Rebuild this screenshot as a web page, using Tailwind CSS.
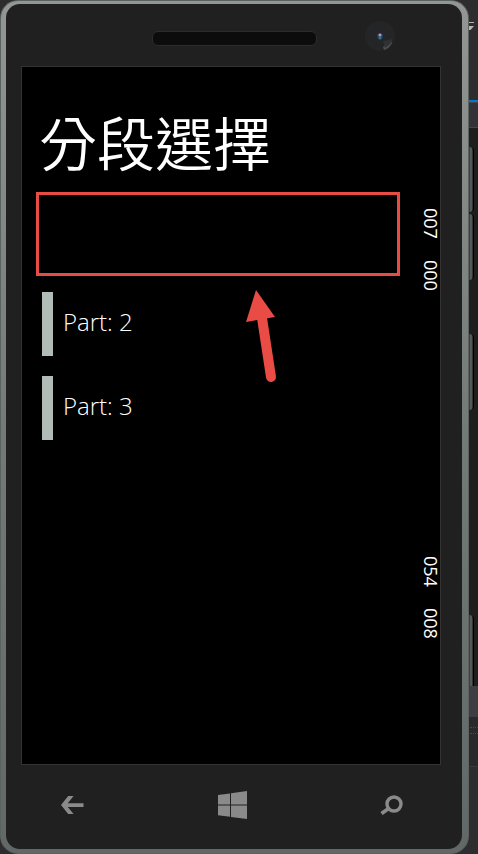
<!DOCTYPE html>
<html lang="zh-Hant">
  <head>
    <meta charset="utf-8" />
    <title>分段選擇</title>
    <meta name="viewport" content="width=device-width, initial-scale=1" />
    <script src="https://cdn.jsdelivr.net/npm/@tailwindcss/browser@4"></script>
  </head>

  <body class="flex min-h-screen overflow-hidden bg-[#2d2d30] font-['Open_Sans','Noto_Sans_CJK_TC',sans-serif] text-white">
    <main
      class="flex flex-1 flex-col rounded-[18px] border border-[#5c625f] bg-linear-to-b from-[#929794] via-[#747a77] to-[#616866] pt-[3px] pr-1.5 pb-1 pl-[5px]"
    >
      <div class="flex flex-1 flex-col rounded-[14px] bg-[#202020]">
        <!-- speaker and front camera -->
        <header class="relative h-[62px]">
          <div class="mx-auto mt-[27px] h-[15px] w-[165px] rounded-md border border-[#2c2c2c] bg-[#0c0c0c]"></div>
          <svg class="absolute top-[17px] right-[67px] size-[30px]" viewBox="0 0 30 30" aria-hidden="true">
            <circle cx="15" cy="15" r="15" fill="#242527" />
            <path d="M18 26 L26 20 L27 22 A13 13 0 0 1 19 29 Z" fill="#4c4d4e" />
            <path d="M18 20 L28 18 L25 23 L20 27 Z" fill="#303133" />
            <circle cx="15" cy="15" r="3" fill="#343958" />
            <circle cx="15" cy="14" r="1.5" fill="#9aa0d0" />
            <circle cx="15" cy="17" r="1.5" fill="#16818a" />
          </svg>
        </header>

        <!-- screen -->
        <section class="relative mr-[21px] ml-[15px] flex flex-1 border border-[#333333] bg-black">
          <div class="min-w-0 flex-1 pl-3.5">
            <h1 class="mt-[43px] ml-[3px] text-[58px] leading-[68px] font-[350] whitespace-nowrap">分段選擇</h1>
            <div class="mt-3.5 h-[84px] border-3 border-[#e94b45]"></div>
            <ul class="mt-4 ml-1.5 space-y-5">
              <li>
                <button class="flex h-16 w-full gap-2.5 text-left text-2xl font-[350]" type="button">
                  <span class="h-full w-[11px] bg-[#b2bcb7]"></span>
                  <span class="mt-3.5">Part: 2</span>
                </button>
              </li>
              <li>
                <button class="flex h-16 w-full gap-2.5 text-left text-2xl font-[350]" type="button">
                  <span class="h-full w-[11px] bg-[#b2bcb7]"></span>
                  <span class="mt-3.5">Part: 3</span>
                </button>
              </li>
            </ul>
          </div>

          <!-- frame rate counters -->
          <div class="flex w-10 flex-col items-end pt-[141px] text-[18px] leading-[18px] font-medium">
            <span class="h-[52px] [writing-mode:vertical-rl]">007</span>
            <span class="h-[52px] [writing-mode:vertical-rl]">000</span>
            <span class="mt-[244px] h-[52px] [writing-mode:vertical-rl]">054</span>
            <span class="h-[52px] [writing-mode:vertical-rl]">008</span>
          </div>

          <svg class="absolute top-[223px] left-[223px] h-[94px] w-8" viewBox="0 0 32 94" aria-hidden="true">
            <path d="M26 87 L17 28" fill="none" stroke="#e94b45" stroke-width="10" stroke-linecap="round" />
            <path d="M11 0 L30 27 L1 32 Z" fill="#e94b45" />
          </svg>
        </section>

        <nav class="flex h-[84px] items-center justify-between pr-[59px] pb-1 pl-[55px] text-[#8a8a8a]">
          <button type="button" aria-label="Back">
            <svg class="h-[18px] w-[23px]" viewBox="0 0 23 18" fill="currentColor">
              <path d="M0 9 L7.2 0 H12.6 L6.8 7.3 H22.5 V10.9 H6.8 L12.6 18 H7.2 Z" />
            </svg>
          </button>
          <button type="button" aria-label="Start">
            <svg class="h-7 w-[29px]" viewBox="0 0 29 28" fill="currentColor">
              <path d="M0 4 L12 2.4 V13.5 H0 Z M13 2.2 L29 0 V13.5 H13 Z M0 14.6 H12 V25.8 L0 24.3 Z M13 14.6 H29 V28 L13 26 Z" />
            </svg>
          </button>
          <button type="button" aria-label="Search">
            <svg class="h-5 w-[23px]" viewBox="0 0 23 20" fill="none" stroke="currentColor">
              <circle cx="14" cy="9" r="7" stroke-width="3.4" />
              <path d="M9 13.3 L1.5 18.5" stroke-width="3.8" />
            </svg>
          </button>
        </nav>
      </div>
    </main>

    <!-- side buttons, with the window behind them -->
    <aside class="flex w-[9px] flex-col bg-[#2d2d30]">
      <div class="h-[100px] overflow-hidden pt-[22px]">
        <svg class="h-2 w-1.5" viewBox="0 0 6 8" fill="#b5b5b5" aria-hidden="true">
          <path d="M0 0 H5 V1 H0 Z M0 4 H5 L1.5 8 H0 Z" />
        </svg>
      </div>
      <div class="h-[2px] bg-[#007acc]"></div>
      <div class="h-[26px] border-y border-[#46464a] bg-[#333337]"></div>
      <div class="h-[558px] bg-[#1e1e1e] pt-[19px]">
        <div class="h-[65px] w-[5px] rounded-r-sm border-r border-black bg-linear-to-r from-[#303132] via-[#65676a] to-[#252627]"></div>
        <div class="mt-0.5 h-[66px] w-[5px] rounded-r-sm border-r border-black bg-linear-to-r from-[#303132] via-[#65676a] to-[#252627]"></div>
        <div class="mt-[54px] h-[76px] w-[5px] rounded-r-sm border-r border-black bg-linear-to-r from-[#303132] via-[#65676a] to-[#252627]"></div>
        <div class="mt-[205px] h-[78px] w-[5px] rounded-r-sm border-r border-black bg-linear-to-r from-[#303132] via-[#65676a] to-[#252627]"></div>
      </div>
      <div class="h-[31px] bg-[#3e3e42]"></div>
      <div class="h-[50px] border-b border-[#38383b] bg-[#29292c] pt-2.5">
        <div class="ml-px h-[7px] border-y border-dotted border-[#48484b]"></div>
      </div>
    </aside>
  </body>
</html>
